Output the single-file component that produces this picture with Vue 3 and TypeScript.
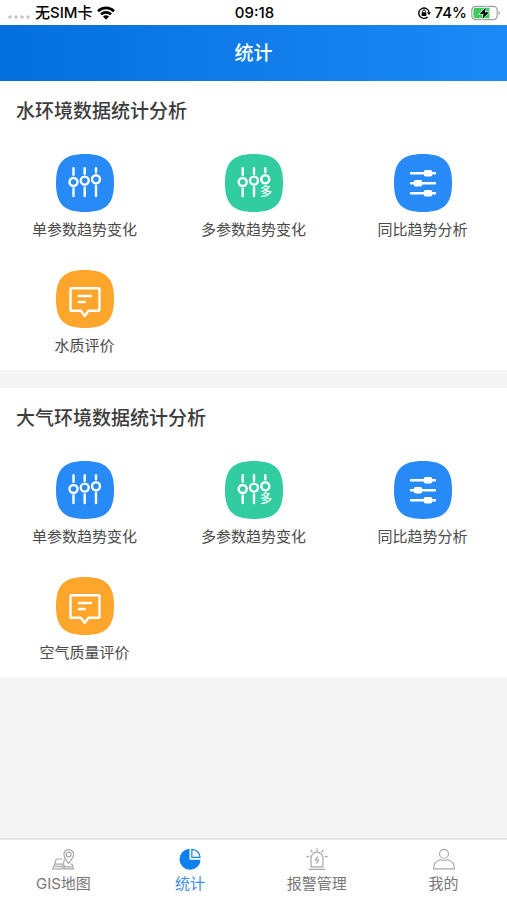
<script setup lang="ts">
import { ref } from 'vue'

type IconName = 'single' | 'multi' | 'compare' | 'comment'
type TabName = 'map' | 'stats' | 'alarm' | 'mine'

interface Entry {
  label: string
  icon: IconName
}

interface Section {
  title: string
  entries: Entry[]
}

const sections: Section[] = [
  {
    title: '水环境数据统计分析',
    entries: [
      { label: '单参数趋势变化', icon: 'single' },
      { label: '多参数趋势变化', icon: 'multi' },
      { label: '同比趋势分析', icon: 'compare' },
      { label: '水质评价', icon: 'comment' },
    ],
  },
  {
    title: '大气环境数据统计分析',
    entries: [
      { label: '单参数趋势变化', icon: 'single' },
      { label: '多参数趋势变化', icon: 'multi' },
      { label: '同比趋势分析', icon: 'compare' },
      { label: '空气质量评价', icon: 'comment' },
    ],
  },
]

const tabs: { name: TabName; label: string }[] = [
  { name: 'map', label: 'GIS地图' },
  { name: 'stats', label: '统计' },
  { name: 'alarm', label: '报警管理' },
  { name: 'mine', label: '我的' },
]

const activeTab = ref<TabName>('stats')
</script>

<template>
  <div class="app">
    <div class="status">
      <div class="status-side">
        <svg class="dots" width="22" height="4" viewBox="0 0 22 4" aria-hidden="true">
          <circle cx="2" cy="2" r="1.7" />
          <circle cx="8" cy="2" r="1.7" />
          <circle cx="14" cy="2" r="1.7" />
          <circle cx="20" cy="2" r="1.7" />
        </svg>
        <span class="carrier">无SIM卡</span>
        <svg width="18" height="14" viewBox="0 0 18 14" aria-hidden="true">
          <g fill="none" stroke="#000" stroke-width="2.6">
            <path d="M1 5.2a11.4 11.4 0 0 1 16 0" />
            <path d="M4 8.4a7.1 7.1 0 0 1 10 0" />
          </g>
          <path d="M6 10.6a4.3 4.3 0 0 1 6 0L9 13.7z" />
        </svg>
      </div>
      <span class="time">09:18</span>
      <div class="status-side status-end">
        <svg width="14" height="14" viewBox="0 0 14 14" aria-hidden="true">
          <path d="M10.6 10.9a5.2 5.2 0 1 1 1.5-4.4" fill="none" stroke="#000" stroke-width="1.4" />
          <path d="M10 6.2h4l-2 3z" />
          <rect x="4.6" y="6.3" width="4.8" height="3.6" rx=".6" />
          <path d="M5.6 6.5V5.3a1.4 1.4 0 0 1 2.8 0v1.2" fill="none" stroke="#000" stroke-width="1" />
        </svg>
        <span class="percent">74%</span>
        <svg width="30" height="16" viewBox="0 0 30 16" aria-hidden="true">
          <rect x=".8" y="1.3" width="25.4" height="13.4" rx="4" fill="#fff" stroke="#a0a0a0" stroke-width="1.2" />
          <path d="M5 2.8h13.500v10.400H5A2.600 2.600 0 0 1 2.400 10.600V5.400A2.600 2.600 0 0 1 5 2.800z" fill="#3ccb5e" />
          <path d="M27.6 5.8c1.6.6 1.6 3.800 0 4.400z" fill="#a0a0a0" />
          <path d="M15 2.200 8.600 9h4l-1.300 5L18 7.200h-4.200z" stroke="#fff" stroke-width="1.2" paint-order="stroke" />
        </svg>
      </div>
    </div>

    <header class="header">
      <h1>统计</h1>
    </header>

    <main class="content">
      <section v-for="section in sections" :key="section.title" class="section">
        <h2>{{ section.title }}</h2>
        <div class="grid">
          <button v-for="entry in section.entries" :key="entry.label" type="button" class="entry">
            <svg class="badge" :class="entry.icon" viewBox="0 0 58 58" aria-hidden="true">
              <path class="tile" d="M29 0C50 0 58 8 58 29S50 58 29 58 0 50 0 29 8 0 29 0z" />
              <g v-if="entry.icon === 'single'" class="stroke">
                <path d="M17.5 14.2v6.500M17.500 34.500v7.500M28.700 14.200v5.500M28.700 33.500v8.500M40 14.200v4M40 32v10" />
                <circle cx="17.5" cy="28" r="4" />
                <circle cx="28.7" cy="26.6" r="4" />
                <circle cx="40" cy="25.2" r="4" />
              </g>
              <g v-else-if="entry.icon === 'multi'">
                <g class="stroke">
                  <path d="M17.700 14.200v6.500M17.700 34.500v7.500M29 14.200v5.500M29 33.500v8.500M40.300 14.200v4" />
                  <circle cx="17.7" cy="28" r="4" />
                  <circle cx="29" cy="26.6" r="4" />
                  <circle cx="40.3" cy="25.2" r="4" />
                </g>
                <text x="41" y="42" text-anchor="middle">多</text>
              </g>
              <g v-else-if="entry.icon === 'compare'" class="stroke">
                <path d="M17 19.300h24M17 29.300h24M17 39.300h24" />
                <g class="solid">
                  <rect x="29.7" y="16" width="8.6" height="6.6" rx="2" />
                  <rect x="19.7" y="26" width="8.6" height="6.6" rx="2" />
                  <rect x="29.7" y="36" width="8.6" height="6.6" rx="2" />
                </g>
              </g>
              <g v-else class="stroke">
                <path d="M15.500 18.300h27a1 1 0 0 1 1 1v20.500a1 1 0 0 1-1 1H32.500L28.700 46l-3.800-5.200H15.500a1 1 0 0 1-1-1V19.300a1 1 0 0 1 1-1z" />
                <path d="M22.800 26h12.200M22.800 32h6" />
              </g>
            </svg>
            <span>{{ entry.label }}</span>
          </button>
        </div>
      </section>
    </main>

    <nav class="tabs">
      <button
        v-for="tab in tabs"
        :key="tab.name"
        type="button"
        class="tab"
        :class="{ active: tab.name === activeTab }"
        @click="activeTab = tab.name"
      >
        <svg v-if="tab.name === 'map'" viewBox="0 0 24 24" aria-hidden="true">
          <path d="M18 17c-1.800-3.300-5-6-5-10a5.300 5.300 0 0 1 10.600 0c0 4-3.800 6.700-5.600 10z" />
          <circle cx="18.2" cy="7" r="2.6" />
          <path d="M11.500 12H6a2 2 0 0 0-2 1.500l-1 4h9.500l1-5M3 17.500l-2.300 5.300H11l1.500-5.300M14 18.500l-1.300 4.300h11l-2-5.300h-1.500M3 20h8.500M14 20.500h7.500" />
        </svg>
        <svg v-else-if="tab.name === 'stats'" viewBox="0 0 24 24" aria-hidden="true">
          <path class="fill" d="M11.500.8v12h12A11.500 11.500 0 1 1 11.500.8z" />
          <path d="M14 1.500v8.800h9A9.300 9.300 0 0 0 14 1.500z" />
        </svg>
        <svg v-else-if="tab.name === 'alarm'" viewBox="0 0 24 24" aria-hidden="true">
          <path d="M5.500 20.500V11a6.500 6.500 0 0 1 13 0v9.500zM3 23.300h18" />
          <path d="M12 .3v3M5 2l2 2.800M19 2l-2 2.800M.5 9.500h3M20.500 9.500h3" />
          <path d="m12.800 9.500-2.600 3.700h3.600l-2.600 3.800" />
        </svg>
        <svg v-else viewBox="0 0 24 24" aria-hidden="true">
          <circle cx="12" cy="6.300" r="4.900" />
          <path d="M.7 22.800c0-5.300 2.800-9 7.600-10.300 1.400 1.500 6 1.500 7.400 0 4.800 1.300 7.600 5 7.600 10.300z" />
        </svg>
        <span>{{ tab.label }}</span>
      </button>
    </nav>
  </div>
</template>

<style>
body {
  margin: 0;
  background: #f5f5f5;
}
</style>

<style scoped>
.app {
  display: flex;
  flex-direction: column;
  min-height: 100vh;
  color: #4a4a4a;
  font-family: Inter, "Noto Sans CJK SC", sans-serif;
}

button {
  margin: 0;
  padding: 0;
  border: 0;
  background: none;
  color: inherit;
  font: inherit;
  cursor: pointer;
}

.status {
  display: grid;
  grid-template-columns: 1fr auto 1fr;
  align-items: center;
  height: 25px;
  padding: 0 6px 0 8px;
  background: #fff;
  color: #000;
  font-size: 15px;
  font-weight: 500;
  line-height: 24px;
}

.status-side {
  display: flex;
  align-items: center;
  gap: 5px;
}

.status-end {
  justify-content: flex-end;
  gap: 4px;
}

.dots {
  margin-top: 8px;
  fill: #c4c4c4;
}

.header {
  display: flex;
  align-items: center;
  justify-content: center;
  height: 56px;
  background: linear-gradient(90deg, #0470dd, #1b89f6);
  color: #fff;
}

h1 {
  margin: 2px 0 0;
  font-size: 19px;
  font-weight: 500;
  line-height: 24px;
}

.content {
  display: flex;
  flex: 1;
  flex-direction: column;
  gap: 18px;
}

.section {
  padding: 20px 0 13px;
  background: #fff;
}

h2 {
  margin: 0 16px 31px;
  color: #3c3c3c;
  font-size: 19px;
  font-weight: 500;
  line-height: 22px;
}

.grid {
  display: grid;
  grid-template-columns: repeat(3, 1fr);
  row-gap: 29px;
}

.entry {
  display: flex;
  flex-direction: column;
  align-items: center;
  gap: 7px;
  font-size: 15px;
  line-height: 22px;
}

.badge {
  width: 58px;
  height: 58px;
}

.tile {
  fill: #288af6;
}

.multi .tile {
  fill: #31cda1;
}

.comment .tile {
  fill: #fea62c;
}

.badge text {
  fill: #fff;
  font-size: 12px;
  font-weight: 500;
}

.stroke {
  fill: none;
  stroke: #fff;
  stroke-width: 2.4;
  stroke-linecap: round;
  stroke-linejoin: round;
}

.solid {
  fill: #fff;
  stroke: none;
}

.tabs {
  position: sticky;
  bottom: 0;
  display: grid;
  grid-template-columns: repeat(4, 1fr);
  border-top: 2px solid #e6e6e6;
  background: #fff;
}

.tab {
  display: flex;
  flex-direction: column;
  align-items: center;
  gap: 4px;
  padding: 8px 0 6px;
  color: #777;
  font-size: 15px;
  line-height: 20px;
}

.tab svg {
  width: 22px;
  height: 22px;
  fill: none;
  stroke: #a5a8ad;
  stroke-width: 1.3;
  stroke-linejoin: round;
}

.tab.active {
  color: #3f8ee8;
}

.tab.active svg {
  stroke: #0f80ee;
}

.tab.active .fill {
  fill: #0f80ee;
  stroke: none;
}
</style>
